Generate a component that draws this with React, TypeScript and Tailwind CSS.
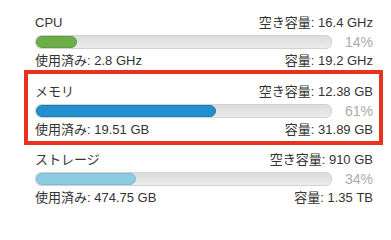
const stats = [
  { name: "CPU", free: "16.4 GHz", used: "2.8 GHz", total: "19.2 GHz", pct: 14, fill: "bg-[#6cae4a] border-[#5e9d3f]" },
  { name: "メモリ", free: "12.38 GB", used: "19.51 GB", total: "31.89 GB", pct: 61, fill: "bg-[#1f90d0] border-[#1a80bb]", boxed: true },
  { name: "ストレージ", free: "910 GB", used: "474.75 GB", total: "1.35 TB", pct: 34, fill: "bg-[#8dcbe0] border-[#7dbcd2]" },
];

type Stat = (typeof stats)[number];

function Usage({ s }: { s: Stat }) {
  return (
    <div>
      <div className="flex justify-between h-[16px] leading-[16px]">
        <span>{s.name}</span>
        <span>空き容量: {s.free}</span>
      </div>
      <div className="flex items-center h-[22px]">
        <div className="relative flex-1 h-[14px] rounded-[6px] border border-[#d2d2d2] bg-gradient-to-b from-[#dcdcdc] to-[#ececec] overflow-hidden">
          <div className={`h-full rounded-[6px] border ${s.fill}`} style={{ width: `${s.pct}%` }} />
        </div>
        <span className="w-[41px] text-right text-[14px] text-[#ababab]">{s.pct}%</span>
      </div>
      <div className="flex justify-between h-[16px] leading-[16px]">
        <span>使用済み: {s.used}</span>
        <span>容量: {s.total}</span>
      </div>
    </div>
  );
}

export default function App() {
  return (
    <div className="w-[391px] h-[227px] bg-white text-[13px] text-[#333] pl-[24px] pr-[8px] pt-[15px] font-['Liberation_Sans','Noto_Sans_CJK_JP',sans-serif]">
      {stats.map((s) =>
        s.boxed ? (
          <div key={s.name} className="mt-[1px] mb-[7px] border-4 border-[#e8321e] pl-[7px] pr-[6px] pt-[10px] pb-[3px]">
            <Usage s={s} />
          </div>
        ) : (
          <div key={s.name} className="pl-[11px] pr-[10px]">
            <Usage s={s} />
          </div>
        )
      )}
    </div>
  );
}
